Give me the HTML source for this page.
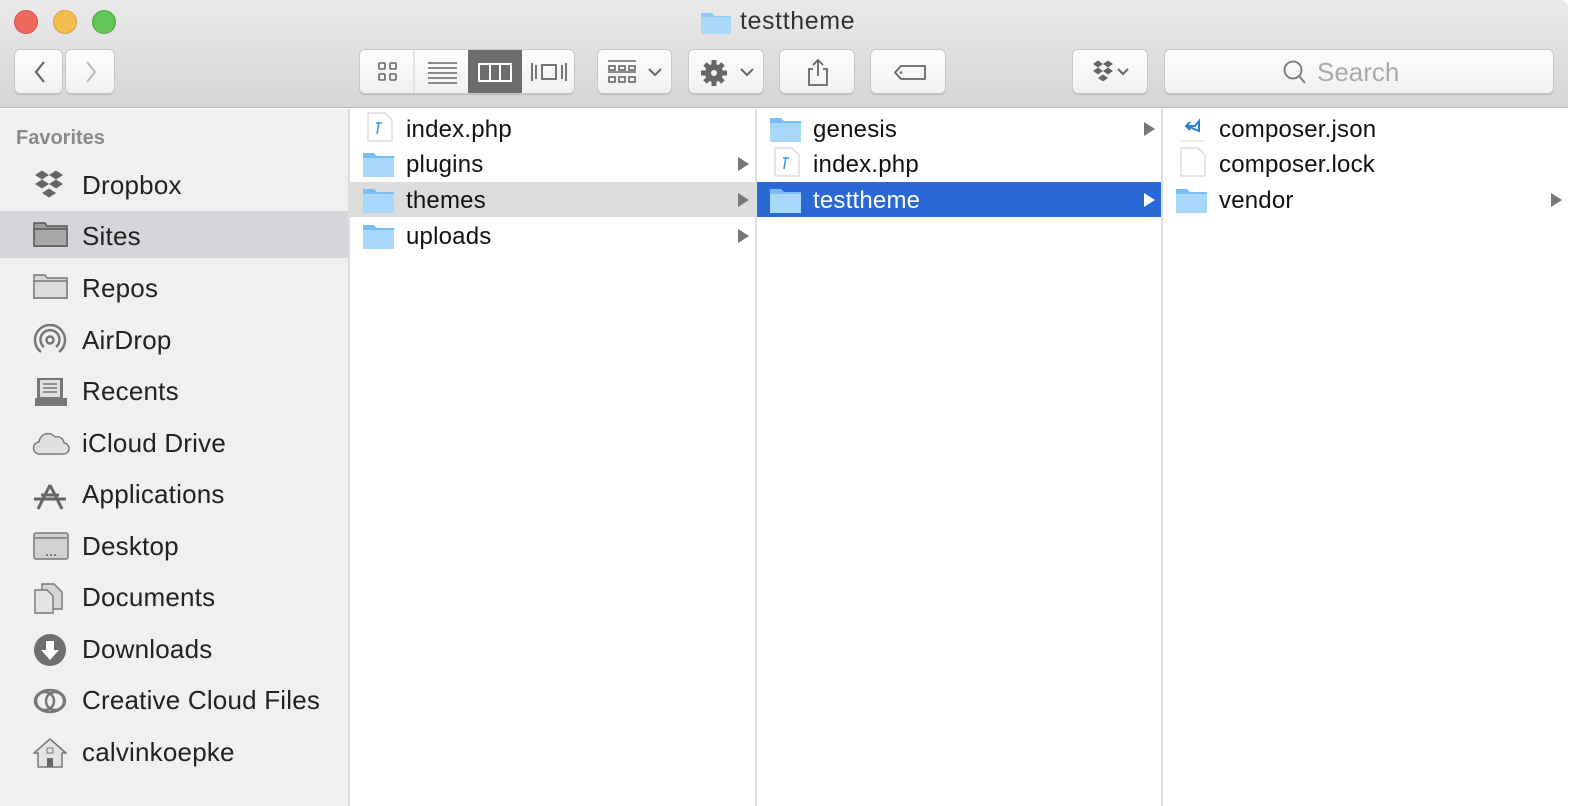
<!DOCTYPE html>
<html><head><meta charset="utf-8"><style>
*{margin:0;padding:0;box-sizing:border-box}
body{width:1582px;height:806px;background:#fff;font-family:"Liberation Sans",sans-serif;position:relative;overflow:hidden}
.win{position:absolute;left:0;top:0;width:1568px;height:806px;overflow:hidden}
.tb{position:absolute;left:0;top:0;width:1568px;height:108px;background:linear-gradient(#ebeaeb,#d6d5d6);border-bottom:1px solid #b9b8b9;border-top-right-radius:8px}
.dot{position:absolute;top:10px;width:24px;height:24px;border-radius:50%}
.btn{position:absolute;top:49px;height:45px;background:linear-gradient(#fdfdfd,#f1f1f1);border:1px solid #c8c8c8;border-radius:6px;box-shadow:0 1px 0 #bdbdbd}
.btn svg{position:absolute;left:0;top:0}
.title{position:absolute;top:7px;font-size:25px;color:#333;letter-spacing:0.6px}
.side{position:absolute;left:0;top:109px;width:350px;height:697px;background:#f0f0f2;border-right:2px solid #dcdcdc}
.fav{position:absolute;left:16px;top:18px;font-size:20px;font-weight:bold;color:#8a8a8a}
.si{position:absolute;left:0;width:348px;height:46px;font-size:26px;color:#222;letter-spacing:0.2px}
.si span{position:absolute;left:82px;top:8px}
.si svg{position:absolute;left:32px;top:7px}
.col{position:absolute;top:109px;height:697px;background:#fff;border-right:2px solid #dedede}
.row{position:absolute;left:0;right:0;height:35px;font-size:24px;color:#111;letter-spacing:0.2px}
.row span{position:absolute;left:56px;top:5px}
.row .ic{position:absolute;left:12px;top:5px}
.arr{position:absolute;right:6px;top:11px;width:0;height:0;border-left:11px solid #777;border-top:7px solid transparent;border-bottom:7px solid transparent}
</style></head><body>
<div class="win">
<div class="tb">
<div class="dot" style="left:14px;background:#ee6a5f;border:1px solid #d55249"></div>
<div class="dot" style="left:53px;background:#f5bf4f;border:1px solid #d6a243"></div>
<div class="dot" style="left:92px;background:#62c655;border:1px solid #50a843"></div>
<svg style="position:absolute;left:700px;top:10px" width="32" height="25"><path d="M1 3h11l3 3h16v18H1z" fill="#8ecbf4"/><path d="M1 7h30v17H1z" fill="#a9d8f8"/></svg>
<div class="title" style="left:740px">testtheme</div>
<div class="btn" style="left:14px;width:49px"><svg width="49" height="45"><path d="M29 12l-8 10 8 10" stroke="#666" stroke-width="2.2" fill="none"/></svg></div>
<div class="btn" style="left:65px;width:50px"><svg width="50" height="45"><path d="M21 12l8 10-8 10" stroke="#bbb" stroke-width="2.2" fill="none"/></svg></div>
<div class="btn" style="left:359px;width:216px;overflow:hidden">
<svg width="216" height="45"><g fill="none" stroke="#666" stroke-width="1.6"><rect x="19" y="13" width="6" height="6" rx="1"/><rect x="30" y="13" width="6" height="6" rx="1"/><rect x="19" y="24" width="6" height="6" rx="1"/><rect x="30" y="24" width="6" height="6" rx="1"/><path d="M54 0v45" stroke="#ddd"/><path d="M68 13h29M68 18h29M68 23h29M68 28h29M68 33h29"/></g><rect x="108" y="0" width="54" height="45" fill="#6d6d6d"/><g fill="none" stroke="#fff" stroke-width="2"><rect x="119" y="14" width="32" height="17"/><path d="M130 14v17M140 14v17"/></g><g fill="none" stroke="#666" stroke-width="1.8"><rect x="182" y="15" width="14" height="14"/><path d="M172 13v18M176 15v14M202 15v14M206 13v18"/></g></svg></div>
<div class="btn" style="left:597px;width:75px"><svg width="75" height="45"><g stroke="#666" stroke-width="1.6" fill="none"><path d="M10 11h28M10 22h28"/><rect x="11" y="16" width="6" height="4"/><rect x="21" y="16" width="6" height="4"/><rect x="31" y="16" width="6" height="4"/><rect x="11" y="27" width="6" height="5"/><rect x="21" y="27" width="6" height="5"/><rect x="31" y="27" width="6" height="5"/><path d="M51 19l6 6 6-6" stroke-width="2"/></g></svg></div>
<div class="btn" style="left:688px;width:76px"><svg width="76" height="45"><g fill="#666"><circle cx="25" cy="23" r="9"/><g stroke="#666" stroke-width="5"><path d="M25 10v26M12 23h26M16 14l18 18M34 14L16 32"/></g></g><circle cx="25" cy="23" r="3" fill="#f5f5f5"/><path d="M52 19l6 6 6-6" stroke="#666" stroke-width="2" fill="none"/></svg></div>
<div class="btn" style="left:779px;width:76px"><svg width="76" height="45"><g stroke="#666" stroke-width="1.8" fill="none"><path d="M33 19h-4v16h18V19h-4M38 10v16M33 15l5-5 5 5"/></g></svg></div>
<div class="btn" style="left:870px;width:76px"><svg width="76" height="45"><path d="M30 16h24v13H30l-6-6.5z" stroke="#666" stroke-width="1.8" fill="none" stroke-linejoin="round"/><circle cx="30" cy="22.5" r="1.3" fill="#666"/></svg></div>
<div class="btn" style="left:1072px;width:76px"><svg width="76" height="45"><g fill="#666"><path d="M20 14l5-3.5 5 3.5-5 3.5zM30 14l5-3.5 5 3.5-5 3.5zM20 21l5-3.5 5 3.5-5 3.5zM30 21l5-3.5 5 3.5-5 3.5zM25 28l5-3.5 5 3.5-5 3.5z"/></g><path d="M45 19l5 5 5-5" stroke="#666" stroke-width="2" fill="none"/></svg></div>
<div class="btn" style="left:1164px;width:390px"><svg width="390" height="45"><circle cx="128" cy="20" r="8.5" stroke="#777" stroke-width="1.8" fill="none"/><path d="M134 26l6 7" stroke="#777" stroke-width="1.8"/></svg><span style="position:absolute;left:152px;top:7px;font-size:26px;color:#a9a9a9">Search</span></div>
</div>
<div class="side">
<div class="fav">Favorites</div>
<div class="si" style="top:53px"><svg width="40" height="32"><g fill="#666"><path d="M3 6l7-4.5 7 4.5-7 4.5zM17 6l7-4.5 7 4.5-7 4.5zM3 15l7-4.5 7 4.5-7 4.5zM17 15l7-4.5 7 4.5-7 4.5zM10 24l7-4.5 7 4.5-7 4.5z"/></g></svg><span>Dropbox</span></div>
<div class="si" style="top:102px;height:47px;background:#d4d6d9"><svg width="40" height="32" style="top:9px"><path d="M2 3h11l2 3h20v20H2z" fill="#9d9d9f" stroke="#555" stroke-width="1.4"/><path d="M2 9h33v17H2z" fill="#a8a8aa" stroke="#555" stroke-width="1.4"/></svg><span style="top:10px">Sites</span></div>
<div class="si" style="top:156px"><svg width="40" height="32"><path d="M2 3h11l2 3h20v20H2z" fill="#d8d8d8" stroke="#777" stroke-width="1.4"/><path d="M2 9h33v17H2z" fill="#dcdcdc" stroke="#777" stroke-width="1.4"/></svg><span>Repos</span></div>
<div class="si" style="top:208px"><svg width="40" height="34"><g stroke="#777" fill="none" stroke-width="2.5"><path d="M9 28a15 15 0 1 1 18 0"/><path d="M12 23a9.5 9.5 0 1 1 12 0"/><circle cx="18" cy="16" r="3.5"/></g></svg><span>AirDrop</span></div>
<div class="si" style="top:259px"><svg width="40" height="34"><path d="M5 3h26v20h4v8H3v-8h2z" fill="#777"/><path d="M8 5h20v17H8z" fill="#e0e0e0"/><path d="M11 9h14M11 13h14M11 17h14" stroke="#777" stroke-width="1.4"/></svg><span>Recents</span></div>
<div class="si" style="top:311px"><svg width="40" height="32"><path d="M8 27a6 6 0 0 1-1-12 9 9 0 0 1 16-5 7 7 0 0 1 9 6 5.5 5.5 0 0 1-1 11z" fill="#e0e0e0" stroke="#777" stroke-width="1.4"/></svg><span>iCloud Drive</span></div>
<div class="si" style="top:362px"><svg width="40" height="34"><g stroke="#666" stroke-width="3" fill="none"><path d="M6 31L18 7M30 31L18 7M2 21h32M9 17h18"/></g></svg><span>Applications</span></div>
<div class="si" style="top:414px"><svg width="40" height="32"><rect x="2" y="3" width="34" height="26" rx="2" fill="#d2d2d2" stroke="#777" stroke-width="1.5"/><path d="M3 8h32" stroke="#777" stroke-width="1.5"/><path d="M14 25h2M18 25h2M22 25h2" stroke="#777" stroke-width="2"/></svg><span>Desktop</span></div>
<div class="si" style="top:465px"><svg width="40" height="34"><path d="M10 3h12l8 8v17H10z" fill="#d4d4d4" stroke="#777" stroke-width="1.4"/><path d="M3 9h12l6 6v17H3z" fill="#e4e4e4" stroke="#777" stroke-width="1.4"/></svg><span>Documents</span></div>
<div class="si" style="top:517px"><svg width="40" height="34"><circle cx="18" cy="17" r="16" fill="#6e6e6e"/><path d="M14 8h8v9h5l-9 10-9-10h5z" fill="#fff"/></svg><span>Downloads</span></div>
<div class="si" style="top:568px"><svg width="40" height="34"><g stroke="#777" stroke-width="2.5" fill="none"><circle cx="13" cy="17" r="9"/><circle cx="23" cy="17" r="9"/><path d="M3 17a15 11 0 0 1 30 0 15 11 0 0 1-30 0"/></g></svg><span>Creative Cloud Files</span></div>
<div class="si" style="top:620px"><svg width="40" height="34"><path d="M18 3L2 17h4v14h24V17h4z" fill="#e4e4e4" stroke="#777" stroke-width="1.5" stroke-linejoin="round"/><rect x="15" y="22" width="6" height="9" fill="#666"/><rect x="15" y="12" width="6" height="5" fill="none" stroke="#777"/></svg><span>calvinkoepke</span></div>
</div>
<div class="col" style="left:350px;width:407px">
<div class="row" style="top:2px"><svg class="ic" width="30" height="30" style="left:16px;top:1px"><path d="M2 1h17l7 7v21H2z" fill="#fff" stroke="#ccc"/><path d="M13 10l-2 12M10 11h6" stroke="#3a9be8" stroke-width="1.6"/></svg><span>index.php</span></div>
<div class="row" style="top:37px"><svg class="ic" width="34" height="27"><path d="M1 2h11l3 3h17v21H1z" fill="#79bdf0"/><path d="M1 7h31v19H1z" fill="#a7d7f9"/></svg><span>plugins</span><div class="arr"></div></div>
<div class="row" style="top:73px;background:#dcdcdc"><svg class="ic" width="34" height="27"><path d="M1 2h11l3 3h17v21H1z" fill="#79bdf0"/><path d="M1 7h31v19H1z" fill="#a7d7f9"/></svg><span>themes</span><div class="arr"></div></div>
<div class="row" style="top:109px"><svg class="ic" width="34" height="27"><path d="M1 2h11l3 3h17v21H1z" fill="#79bdf0"/><path d="M1 7h31v19H1z" fill="#a7d7f9"/></svg><span>uploads</span><div class="arr"></div></div>
</div>
<div class="col" style="left:757px;width:406px">
<div class="row" style="top:2px"><svg class="ic" width="34" height="27"><path d="M1 2h11l3 3h17v21H1z" fill="#79bdf0"/><path d="M1 7h31v19H1z" fill="#a7d7f9"/></svg><span>genesis</span><div class="arr"></div></div>
<div class="row" style="top:37px"><svg class="ic" width="30" height="30" style="left:16px;top:1px"><path d="M2 1h17l7 7v21H2z" fill="#fff" stroke="#ccc"/><path d="M13 10l-2 12M10 11h6" stroke="#3a9be8" stroke-width="1.6"/></svg><span>index.php</span></div>
<div class="row" style="top:73px;background:#2a68d5;color:#fff"><svg class="ic" width="34" height="27"><path d="M1 2h11l3 3h17v21H1z" fill="#79bdf0"/><path d="M1 7h31v19H1z" fill="#a7d7f9"/></svg><span>testtheme</span><div class="arr" style="border-left-color:#fff"></div></div>
</div>
<div class="col" style="left:1163px;width:405px;border-right:none">
<div class="row" style="top:2px"><svg class="ic" width="30" height="30" style="left:16px;top:1px"><path d="M11 10l-4 4 4 4M8 14h8l4-5v10z" stroke="#2b7fd4" stroke-width="2" fill="none"/><path d="M2 29h24" stroke="#ddd"/></svg><span>composer.json</span></div>
<div class="row" style="top:37px"><svg class="ic" width="30" height="30" style="left:16px;top:1px"><path d="M2 1h17l7 7v21H2z" fill="#fff" stroke="#ccc"/></svg><span>composer.lock</span></div>
<div class="row" style="top:73px"><svg class="ic" width="34" height="27"><path d="M1 2h11l3 3h17v21H1z" fill="#79bdf0"/><path d="M1 7h31v19H1z" fill="#a7d7f9"/></svg><span>vendor</span><div class="arr"></div></div>
</div>
</div>
</body></html>
